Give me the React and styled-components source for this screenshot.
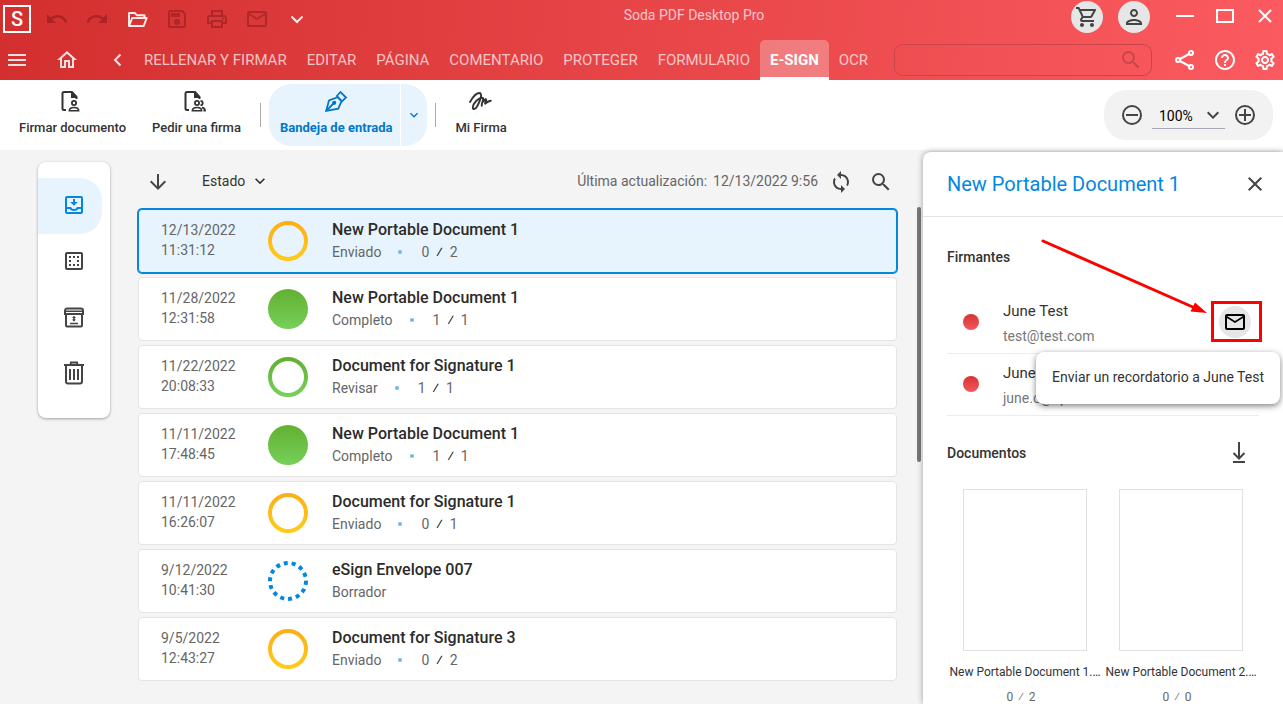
import styled, { createGlobalStyle, css } from "styled-components";
import {
  MdArrowDownward,
  MdClose,
  MdHelpOutline,
  MdKeyboardArrowDown,
  MdMenu,
  MdOutlineHome,
  MdOutlineMail,
  MdOutlinePerson,
  MdOutlinePrint,
  MdOutlineSettings,
  MdOutlineShoppingCart,
  MdRedo,
  MdSearch,
  MdSync,
  MdUndo,
} from "react-icons/md";

const TABS = [
  "RELLENAR Y FIRMAR",
  "EDITAR",
  "PÁGINA",
  "COMENTARIO",
  "PROTEGER",
  "FORMULARIO",
  "E-SIGN",
  "OCR",
];

const ENVELOPES = [
  { id: 1, date: "12/13/2022", time: "11:31:12", title: "New Portable Document 1", state: "Enviado", signed: 0, total: 2 },
  { id: 2, date: "11/28/2022", time: "12:31:58", title: "New Portable Document 1", state: "Completo", signed: 1, total: 1 },
  { id: 3, date: "11/22/2022", time: "20:08:33", title: "Document for Signature 1", state: "Revisar", signed: 1, total: 1 },
  { id: 4, date: "11/11/2022", time: "17:48:45", title: "New Portable Document 1", state: "Completo", signed: 1, total: 1 },
  { id: 5, date: "11/11/2022", time: "16:26:07", title: "Document for Signature 1", state: "Enviado", signed: 0, total: 1 },
  { id: 6, date: "9/12/2022", time: "10:41:30", title: "eSign Envelope 007", state: "Borrador" },
  { id: 7, date: "9/5/2022", time: "12:43:27", title: "Document for Signature 3", state: "Enviado", signed: 0, total: 2 },
];

const SIGNERS = [
  { name: "June Test", email: "test@test.com", remind: true },
  { name: "June C", email: "june.c@sp.com" },
];

const DOCUMENTS = [
  { name: "New Portable Document 1.…", signed: 0, total: 2 },
  { name: "New Portable Document 2.…", signed: 0, total: 0 },
];

/* icons */

const FolderIcon = () => (
  <svg width="24" height="24" viewBox="0 0 24 24" fill="none" stroke="currentColor" strokeWidth="2" strokeLinejoin="round">
    <path d="M4 19V6h5.800l2 2.200H19.500V11" />
    <path d="M4 19 7.200 11H21.700l-3 8z" />
  </svg>
);

const SaveIcon = () => (
  <svg width="24" height="24" viewBox="0 0 24 24" fill="none" stroke="currentColor" strokeWidth="2">
    <path d="M5.500 4H17l3 3v11.500a1.500 1.500 0 0 1-1.500 1.500h-13A1.500 1.500 0 0 1 4 18.500v-13A1.500 1.500 0 0 1 5.500 4z" />
    <path d="M6 8h9" strokeWidth="4" />
    <circle cx="12" cy="15" r="3" fill="currentColor" stroke="none" />
  </svg>
);

const ChevronIcon = ({ left }) => (
  <svg width="16" height="16" viewBox="0 0 16 16" fill="none" stroke="currentColor" strokeWidth="2">
    <path d={left ? "M11.500 2.500 6 8l5.500 5.500" : "M2.500 5.500 8 11l5.500-5.500"} />
  </svg>
);

const SignDocIcon = ({ people }) => (
  <svg width="24" height="24" viewBox="3 0 24 24" fill="none" stroke="currentColor" strokeWidth="2">
    <path d="M8 21H6a1.500 1.500 0 0 1-1.500-1.500v-15A1.500 1.500 0 0 1 6 3h8l4.500 5v2" />
    <path d="M13 3v6h6z" fill="currentColor" stroke="none" />
    <circle cx="16" cy="14" r="2.100" strokeWidth="1.800" />
    <path d="M11.300 21.700c0-2.400 2.700-3.300 4.700-3.300s4.700.9 4.700 3.300z" strokeWidth="1.500" />
    {people && <path d="M19.500 11.800a2.200 2.200 0 0 1 0 4.400M21 18.400c2 .6 3 1.500 3 3.300h-1.500" strokeWidth="1.800" />}
  </svg>
);

const PenIcon = () => (
  <svg width="24" height="24" viewBox="0 0 24 24" fill="none" stroke="currentColor" strokeWidth="1.800">
    <path d="M2.200 21.800 5 11.500l8.500-3.300 4 4-3.200 7.400z" />
    <path d="M12.800 7 16.500 3l5.500 5.500-4 3.800z" />
    <path d="M2.200 21.800 9.500 14.500" />
    <circle cx="10.200" cy="13.800" r="1.200" fill="currentColor" />
  </svg>
);

const SignatureIcon = () => (
  <svg width="24" height="24" viewBox="1 0 24 24" fill="none" stroke="currentColor" strokeWidth="1.900" strokeLinecap="round" strokeLinejoin="round">
    <path d="M2 13C4.500 8.500 8.500 4 11.500 4c3.200.3 1 7.500-2.300 13.200-1.400 2.600-4.400 4.200-4.400 1.300C5 14 10.500 9 14 8.800c3.200 0-.8 5-.2 8M15.200 12.500c1-1.700 2.500-3 3-2 .3 1-1.700 3.300-1 4.200.8-.6 3-2.700 5.600-3" />
  </svg>
);

const InboxIcon = () => (
  <svg width="24" height="24" viewBox="0 0 24 24" fill="none" stroke="currentColor" strokeWidth="2">
    <rect x="4" y="4" width="16" height="16" rx="1" />
    <path d="M4 15h4.500c.8 2.600 6.200 2.600 7 0H20" />
    <path d="M11 6h2v3h2.800L12 12.800 8.200 9H11z" fill="currentColor" stroke="none" />
  </svg>
);

const DraftIcon = () => (
  <svg width="24" height="24" viewBox="0 0 24 24" fill="none" stroke="currentColor" strokeWidth="2">
    <rect x="4" y="4" width="16" height="16" rx="1" />
    <path d="M7 8h10M7 16h10" strokeDasharray="2 2" />
    <path d="M8 11v2M16 11v2" />
  </svg>
);

const ArchiveIcon = () => (
  <svg width="24" height="24" viewBox="0 0 24 24" fill="none" stroke="currentColor" strokeWidth="2">
    <path d="M4 10v10.500a1 1 0 0 0 1 1h14a1 1 0 0 0 1-1V10" />
    <path d="M3 9V5.500a2 2 0 0 1 2-2h14a2 2 0 0 1 2 2V9z" />
    <path d="M4 6.300h16M8 18.500h8M12 11.500V16" strokeWidth="1.600" />
    <path d="m10 13 2-2 2 2zM10 14.500l2 2 2-2z" fill="currentColor" stroke="none" />
  </svg>
);

const TrashIcon = () => (
  <svg width="24" height="24" viewBox="0 0 24 24" fill="none" stroke="currentColor" strokeWidth="2">
    <path d="M2 4h20M8.500 3.500l.5-2h6l.5 2M4 4v16.500a2 2 0 0 0 2 2h12a2 2 0 0 0 2-2V4M8 8v11M12 8v11M16 8v11" />
  </svg>
);

const ShareIcon = () => (
  <svg width="24" height="24" viewBox="0 0 24 24" fill="none" stroke="currentColor" strokeWidth="2">
    <path d="M5 12 18 5M5 12l13 7" />
    <g fill="#f5575b">
      <circle cx="5" cy="12" r="2" />
      <circle cx="18" cy="5" r="2" />
      <circle cx="18" cy="19" r="2" />
    </g>
  </svg>
);

const DownloadIcon = () => (
  <svg width="24" height="24" viewBox="0 0 24 24" fill="none" stroke="currentColor" strokeWidth="2">
    <path d="M12 1v16M6.500 12l5.500 5.500 5.500-5.500M6 21h12" />
  </svg>
);

const ZoomOutIcon = () => (
  <svg width="24" height="24" viewBox="0 0 24 24" fill="none" stroke="currentColor" strokeWidth="2">
    <circle cx="12" cy="12" r="9" />
    <path d="M6 12h12" />
  </svg>
);

const ZoomInIcon = () => (
  <svg width="24" height="24" viewBox="0 0 24 24" fill="none" stroke="currentColor" strokeWidth="2">
    <circle cx="12" cy="12" r="9" />
    <path d="M6 12h12M12 6v12" />
  </svg>
);

const StatusIcon = ({ state }) => {
  if (state === "Borrador") {
    return (
      <svg width="40" height="40" viewBox="0 0 40 40" fill="none">
        <circle cx="20" cy="20" r="18" stroke="#0288e0" strokeWidth="4" strokeDasharray="4 4" />
      </svg>
    );
  }
  const green = state !== "Enviado";
  const gradient = green ? "ring-green" : "ring-yellow";
  const solid = state === "Completo";
  return (
    <svg width="40" height="40" viewBox="0 0 40 40">
      <defs>
        <linearGradient id={gradient} x1="0" y1="0" x2="0" y2="1">
          <stop offset="0" stopColor={green ? "#62b032" : "#fdaf17"} />
          <stop offset="1" stopColor={green ? "#77d05a" : "#fecb1b"} />
        </linearGradient>
      </defs>
      <circle
        cx="20"
        cy="20"
        r={solid ? 20 : 18}
        fill={solid ? `url(#${gradient})` : "none"}
        stroke={solid ? "none" : `url(#${gradient})`}
        strokeWidth="4"
      />
    </svg>
  );
};

export default function App() {
  return (
    <Page>
      <GlobalStyle />
      <Header>
        <TitleBar>
          <Logo>S</Logo>
          <QuickActions>
            <QuickButton aria-label="Deshacer" $dim><MdUndo size={24} /></QuickButton>
            <QuickButton aria-label="Rehacer" $dim><MdRedo size={24} /></QuickButton>
            <QuickButton aria-label="Abrir"><FolderIcon /></QuickButton>
            <QuickButton aria-label="Guardar" $dim><SaveIcon /></QuickButton>
            <QuickButton aria-label="Imprimir" $dim><MdOutlinePrint size={24} /></QuickButton>
            <QuickButton aria-label="Correo" $dim><MdOutlineMail size={24} /></QuickButton>
            <QuickButton aria-label="Más"><ChevronIcon /></QuickButton>
          </QuickActions>
          <AppTitle>Soda PDF Desktop Pro</AppTitle>
          <AccountButtons>
            <RoundButton aria-label="Carrito"><MdOutlineShoppingCart size={24} /></RoundButton>
            <RoundButton aria-label="Cuenta"><MdOutlinePerson size={24} /></RoundButton>
          </AccountButtons>
          <HeaderIcons>
            <HeaderButton aria-label="Minimizar">
              <svg width="20" height="20" fill="none" stroke="currentColor" strokeWidth="2"><path d="M1 10h18" /></svg>
            </HeaderButton>
            <HeaderButton aria-label="Maximizar">
              <svg width="20" height="20" fill="none" stroke="currentColor" strokeWidth="2"><path d="M2 4h16v12H2z" /></svg>
            </HeaderButton>
            <HeaderButton aria-label="Cerrar">
              <svg width="20" height="20" fill="none" stroke="currentColor" strokeWidth="2"><path d="m4 4 12 12M16 4 4 16" /></svg>
            </HeaderButton>
          </HeaderIcons>
        </TitleBar>
        <MenuBar>
          <MenuButton aria-label="Menú"><MdMenu size={24} /></MenuButton>
          <MenuButton aria-label="Inicio" $wide><MdOutlineHome size={24} /></MenuButton>
          <MenuButton aria-label="Anterior"><ChevronIcon left /></MenuButton>
          <Tabs>
            {TABS.map((tab) => (
              <Tab key={tab} href="#" $active={tab === "E-SIGN"}>{tab}</Tab>
            ))}
          </Tabs>
          <SearchBox>
            <SearchInput type="search" aria-label="Buscar" />
            <MdSearch size={24} />
          </SearchBox>
          <HeaderIcons>
            <HeaderButton aria-label="Compartir"><ShareIcon /></HeaderButton>
            <HeaderButton aria-label="Ayuda"><MdHelpOutline size={24} /></HeaderButton>
            <HeaderButton aria-label="Configuración"><MdOutlineSettings size={24} /></HeaderButton>
          </HeaderIcons>
        </MenuBar>
      </Header>

      <Toolbar>
        <ToolButton><SignDocIcon />Firmar documento</ToolButton>
        <ToolButton><SignDocIcon people />Pedir una firma</ToolButton>
        <ToolDivider />
        <SplitButton>
          <ToolButton $active><PenIcon />Bandeja de entrada</ToolButton>
          <SplitArrow aria-label="Opciones de bandeja"><MdKeyboardArrowDown size={16} /></SplitArrow>
        </SplitButton>
        <ToolDivider />
        <ToolButton><SignatureIcon />Mi Firma</ToolButton>
        <ZoomControl>
          <IconButton aria-label="Alejar"><ZoomOutIcon /></IconButton>
          <ZoomField>
            <ZoomSelect aria-label="Zoom" defaultValue="100%">
              <option>50%</option>
              <option>100%</option>
              <option>200%</option>
            </ZoomSelect>
            <MdKeyboardArrowDown size={24} />
          </ZoomField>
          <IconButton aria-label="Acercar"><ZoomInIcon /></IconButton>
        </ZoomControl>
      </Toolbar>

      <Main>
        <SideNav>
          <NavButton aria-label="Bandeja" $active><InboxIcon /></NavButton>
          <NavButton aria-label="Borradores"><DraftIcon /></NavButton>
          <NavButton aria-label="Archivo"><ArchiveIcon /></NavButton>
          <NavButton aria-label="Papelera"><TrashIcon /></NavButton>
        </SideNav>

        <ListArea>
          <ListHeader>
            <IconButton aria-label="Ordenar"><MdArrowDownward size={24} /></IconButton>
            <SortButton>Estado <MdKeyboardArrowDown size={20} /></SortButton>
            <Updated>
              <span>Última actualización:</span>
              <span>12/13/2022 9:56</span>
            </Updated>
            <IconButton aria-label="Actualizar"><MdSync size={24} /></IconButton>
            <IconButton aria-label="Buscar en la lista"><MdSearch size={24} /></IconButton>
          </ListHeader>
          <EnvelopeList>
            {ENVELOPES.map((item) => (
              <Envelope key={item.id} $selected={item.id === 1}>
                <EnvelopeDate>
                  {item.date}
                  <br />
                  {item.time}
                </EnvelopeDate>
                <StatusIcon state={item.state} />
                <EnvelopeInfo>
                  <EnvelopeTitle>{item.title}</EnvelopeTitle>
                  <EnvelopeMeta>
                    {item.state}
                    {item.total && (
                      <>
                        <Dot />
                        <Count>
                          {item.signed}
                          <Slash>⁄</Slash>
                          {item.total}
                        </Count>
                      </>
                    )}
                  </EnvelopeMeta>
                </EnvelopeInfo>
              </Envelope>
            ))}
          </EnvelopeList>
        </ListArea>
        <ScrollTrack>
          <ScrollThumb />
        </ScrollTrack>

        <Panel>
          <PanelHeader>
            <PanelTitle>New Portable Document 1</PanelTitle>
            <IconButton aria-label="Cerrar panel"><MdClose size={24} /></IconButton>
          </PanelHeader>
          <PanelBody>
            <SectionTitle>Firmantes</SectionTitle>
            <SignerList>
              {SIGNERS.map((signer) => (
                <Signer key={signer.name}>
                  <SignerDot />
                  <SignerInfo>
                    <SignerName>{signer.name}</SignerName>
                    <SignerEmail>{signer.email}</SignerEmail>
                  </SignerInfo>
                  {signer.remind && (
                    <Reminder>
                      <RemindButton aria-label="Enviar un recordatorio a June Test">
                        <MdOutlineMail size={24} />
                      </RemindButton>
                      <Highlight />
                      <Arrow width="170" height="80" viewBox="0 0 170 80">
                        <path d="M2 3 154 70" stroke="#fe0000" strokeWidth="3" strokeLinecap="round" />
                        <path d="m166 75-16.500-1.500 4.500-9z" fill="#fe0000" />
                      </Arrow>
                      <Tooltip role="tooltip">Enviar un recordatorio a June Test</Tooltip>
                    </Reminder>
                  )}
                </Signer>
              ))}
            </SignerList>
            <DocumentsHeader>
              <SectionTitle>Documentos</SectionTitle>
              <IconButton aria-label="Descargar"><DownloadIcon /></IconButton>
            </DocumentsHeader>
            <Documents>
              {DOCUMENTS.map((item) => (
                <Document key={item.name}>
                  <Thumbnail />
                  <DocumentName>{item.name}</DocumentName>
                  <DocumentCount>
                    {item.signed}
                    <span>⁄</span>
                    {item.total}
                  </DocumentCount>
                </Document>
              ))}
            </Documents>
          </PanelBody>
        </Panel>
      </Main>
    </Page>
  );
}

const GlobalStyle = createGlobalStyle`
  * {
    box-sizing: border-box;
  }

  body {
    margin: 0;
    font-family: Roboto, "Liberation Sans", sans-serif;
    font-size: 14px;
    color: #333;
    background: #f4f4f4;
  }

  button {
    display: flex;
    align-items: center;
    justify-content: center;
    padding: 0;
    border: 0;
    background: none;
    color: inherit;
    font: inherit;
    cursor: pointer;
  }

  svg {
    flex-shrink: 0;
  }

  h1, h2, h3, p, ul {
    margin: 0;
    padding: 0;
    font-weight: 400;
    list-style: none;
  }
`;

const Page = styled.div`
  display: flex;
  flex-direction: column;
  height: 100vh;
  overflow: hidden;
`;

const Header = styled.header`
  flex-shrink: 0;
  color: #fff;
  background: linear-gradient(95deg, #d32f2f, #fb5b60);
`;

const HeaderIcons = styled.div`
  display: flex;
  gap: 4px;
  margin-left: 15px;
`;

const TitleBar = styled.div`
  display: flex;
  align-items: center;
  height: 40px;
  padding: 0 0 2px 3px;

  ${HeaderIcons} {
    padding-bottom: 6px;
  }
`;

const Logo = styled.div`
  width: 28px;
  height: 28px;
  border: 2px solid #fff;
  font-size: 20px;
  font-weight: 500;
  line-height: 24px;
  text-align: center;
`;

const QuickActions = styled.div`
  display: flex;
  margin-left: 6px;
`;

const QuickButton = styled.button`
  width: 40px;
  height: 38px;

  svg {
    opacity: ${({ $dim }) => ($dim ? 0.28 : 0.9)};
    color: ${({ $dim }) => ($dim ? "#400" : "#fff")};
  }
`;

const AppTitle = styled.h1`
  flex: 1;
  padding-bottom: 8px;
  font-size: 14px;
  line-height: 20px;
  text-align: center;
  color: rgba(255, 255, 255, 0.7);
`;

const AccountButtons = styled.div`
  display: flex;
  gap: 15px;
  padding: 0 2px 4px 0;
`;

const RoundButton = styled.button`
  width: 32px;
  height: 32px;
  border-radius: 50%;
  background: #e6e6e6;
  color: #444;
`;

const HeaderButton = styled.button`
  width: 36px;
  height: 32px;
`;

const MenuBar = styled.nav`
  display: flex;
  align-items: center;
  height: 40px;
`;

const MenuButton = styled.button`
  width: ${({ $wide }) => ($wide ? 66 : 34)}px;
  height: 40px;
  color: rgba(255, 255, 255, 0.85);
`;

const Tabs = styled.div`
  display: flex;
`;

const Tab = styled.a`
  height: 40px;
  padding: 0 10px;
  font-size: 15px;
  line-height: 40px;
  white-space: nowrap;
  text-decoration: none;
  color: rgba(255, 255, 255, 0.7);

  ${({ $active }) =>
    $active &&
    css`
      border-bottom: 3px solid #fff;
      border-radius: 5px 5px 0 0;
      background: rgba(255, 255, 255, 0.28);
      color: #fff;
      font-weight: 700;
    `}
`;

const SearchBox = styled.label`
  display: flex;
  flex: 1;
  align-items: center;
  height: 32px;
  margin-left: 16px;
  padding-right: 8px;
  border: 1px solid #c8464a;
  border-radius: 9px;
  color: #c8464a;
`;

const SearchInput = styled.input`
  flex: 1;
  min-width: 0;
  height: 28px;
  padding: 0 12px;
  border: 0;
  outline: 0;
  background: none;
  color: #fff;
`;

const Toolbar = styled.div`
  display: flex;
  flex-shrink: 0;
  align-items: center;
  height: 70px;
  padding: 0 10px 0 8px;
  background: #fff;
`;

const ToolButton = styled.button`
  flex-direction: column;
  gap: 6px;
  height: 62px;
  padding: 0 11px 4px;
  font-size: 13px;
  font-weight: 500;
  line-height: 18px;
  white-space: nowrap;
  color: ${({ $active }) => ($active ? "#0277c8" : "#333")};

  & + & {
    margin-left: 4px;
  }
`;

const ToolDivider = styled.div`
  width: 1px;
  height: 24px;
  margin: 0 8px;
  background: #aaa;
`;

const SplitButton = styled.div`
  display: flex;
  height: 62px;
  border-radius: 22px;
  background: #e7f4fe;

  ${ToolButton} {
    padding: 0 8px 4px 11px;
    font-weight: 700;
  }
`;

const SplitArrow = styled.button`
  width: 27px;
  border-left: 1px solid #fff;
  color: #0277c8;
`;

const ZoomControl = styled.div`
  display: flex;
  align-items: center;
  gap: 8px;
  height: 50px;
  margin-left: auto;
  padding: 0 16px;
  border-radius: 22px;
  background: #f2f2f2;
  color: #444;
`;

const IconButton = styled.button`
  width: 24px;
  height: 24px;
  color: #444;
`;

const ZoomField = styled.label`
  display: flex;
  align-items: center;
  width: 73px;
  height: 28px;
  border-bottom: 1px solid #a7a9b4;
`;

const ZoomSelect = styled.select`
  flex: 1;
  min-width: 0;
  padding: 2px 0 0 7px;
  border: 0;
  appearance: none;
  background: none;
  font: inherit;
  color: #000;
`;

const Main = styled.main`
  display: flex;
  flex: 1;
  min-height: 0;
`;

const SideNav = styled.nav`
  align-self: flex-start;
  width: 72px;
  margin: 12px 28px 0 38px;
  padding: 16px 0;
  border-radius: 8px;
  background: #fff;
  box-shadow: 0 1px 3px rgba(0, 0, 0, 0.35);
`;

const NavButton = styled.button`
  width: 64px;
  height: 56px;
  padding: 0 0 2px 8px;
  border-radius: 0 22px 22px 0;
  background: ${({ $active }) => ($active ? "#e7f4fe" : "none")};
  color: ${({ $active }) => ($active ? "#0288e0" : "#444")};
`;

const ListArea = styled.section`
  flex: 1;
  min-width: 0;
`;

const ListHeader = styled.div`
  display: flex;
  align-items: center;
  gap: 16px;
  height: 59px;
  padding: 4px 4px 0 8px;
`;

const SortButton = styled.button`
  gap: 5px;
  margin-left: 16px;
  padding-bottom: 2px;
`;

const Updated = styled.p`
  display: flex;
  gap: 6px;
  margin: 0 -5px 0 auto;
  padding-bottom: 2px;
  color: #666;
`;

const EnvelopeList = styled.ul`
  display: flex;
  flex-direction: column;
  gap: 4px;
`;

const Envelope = styled.li`
  display: flex;
  align-items: center;
  height: 64px;
  padding-left: 22px;
  border: 1px solid #e4e4e4;
  border-radius: 4px;
  background: #fff;

  ${({ $selected }) =>
    $selected &&
    css`
      border-color: #0288e0;
      background: #e7f4fe;
      box-shadow: 0 0 0 1px #0288e0;
    `}
`;

const EnvelopeDate = styled.p`
  width: 107px;
  padding-bottom: 2px;
  line-height: 20px;
  color: #666;
`;

const EnvelopeInfo = styled.div`
  margin-left: 24px;
  padding-bottom: 2px;
`;

const EnvelopeTitle = styled.h3`
  font-size: 16px;
  font-weight: 500;
  line-height: 24px;
  color: #2b2b2b;
`;

const EnvelopeMeta = styled.p`
  display: flex;
  align-items: center;
  line-height: 20px;
  color: #666;
`;

const Dot = styled.span`
  width: 4px;
  height: 4px;
  margin: 0 19px 0 17px;
  border-radius: 50%;
  background: #74b6e4;
`;

const Count = styled.span`
  display: flex;
  align-items: center;
`;

const Slash = styled.span`
  margin: 0 7px;
  color: #000;
`;

const ScrollTrack = styled.div`
  width: 6px;
  margin: 57px 0 0 20px;
`;

const ScrollThumb = styled.div`
  width: 4px;
  height: 255px;
  border-radius: 2px;
  background: #777;
`;

const Panel = styled.aside`
  width: 360px;
  margin-top: 2px;
  border-radius: 8px 0 0 0;
  background: #fff;
  box-shadow: 0 0 6px rgba(0, 0, 0, 0.35);
`;

const PanelHeader = styled.div`
  display: flex;
  align-items: center;
  justify-content: space-between;
  height: 65px;
  padding: 0 16px 0 24px;
  border-bottom: 1px solid #e4e4e4;
`;

const PanelTitle = styled.h2`
  font-size: 20px;
  line-height: 24px;
  color: #0288e0;
`;

const PanelBody = styled.div`
  padding: 30px 24px 0;
`;

const SectionTitle = styled.h3`
  font-size: 14px;
  font-weight: 500;
  line-height: 20px;
`;

const SignerList = styled.ul`
  margin-top: 25px;
`;

const Signer = styled.li`
  display: flex;
  align-items: center;
  height: 62px;
  padding: 0 8px 2px 16px;
  border-bottom: 1px solid #ececec;
`;

const SignerDot = styled.span`
  width: 16px;
  height: 16px;
  margin-right: 24px;
  border-radius: 50%;
  background: linear-gradient(#d43335, #f4575b);
`;

const SignerInfo = styled.div`
  flex: 1;
  padding-top: 2px;
`;

const SignerName = styled.p`
  font-size: 15px;
  line-height: 26px;
`;

const SignerEmail = styled.p`
  line-height: 24px;
  color: #777;
`;

const Reminder = styled.div`
  position: relative;
`;

const RemindButton = styled.button`
  width: 32px;
  height: 32px;
  border-radius: 50%;
  background: #e6e6e6;
  color: #000;
`;

const Highlight = styled.span`
  position: absolute;
  top: -5px;
  left: -8px;
  width: 51px;
  height: 41px;
  border: 3px solid #fe0000;
`;

const Arrow = styled.svg`
  position: absolute;
  right: 40px;
  bottom: 20px;
`;

const Tooltip = styled.div`
  position: absolute;
  top: 46px;
  right: -29px;
  z-index: 1;
  padding: 15px 16px 17px;
  border-radius: 8px;
  background: #fff;
  box-shadow: 0 2px 6px rgba(0, 0, 0, 0.5);
  line-height: 20px;
  white-space: nowrap;
`;

const DocumentsHeader = styled.div`
  display: flex;
  align-items: center;
  justify-content: space-between;
  margin-top: 25px;
  padding-right: 8px;
`;

const Documents = styled.div`
  display: grid;
  grid-template-columns: 1fr 1fr;
  margin-top: 24px;
`;

const Document = styled.div`
  display: flex;
  flex-direction: column;
  align-items: center;
  min-width: 0;
`;

const Thumbnail = styled.div`
  width: 124px;
  height: 162px;
  border: 1px solid #e0e0e0;
`;

const DocumentName = styled.p`
  margin-top: 12px;
  font-size: 12px;
  line-height: 18px;
  white-space: nowrap;
`;

const DocumentCount = styled.p`
  display: flex;
  gap: 5px;
  margin-top: 7px;
  padding-right: 8px;
  font-size: 12px;
  line-height: 18px;
  color: #666;
`;
